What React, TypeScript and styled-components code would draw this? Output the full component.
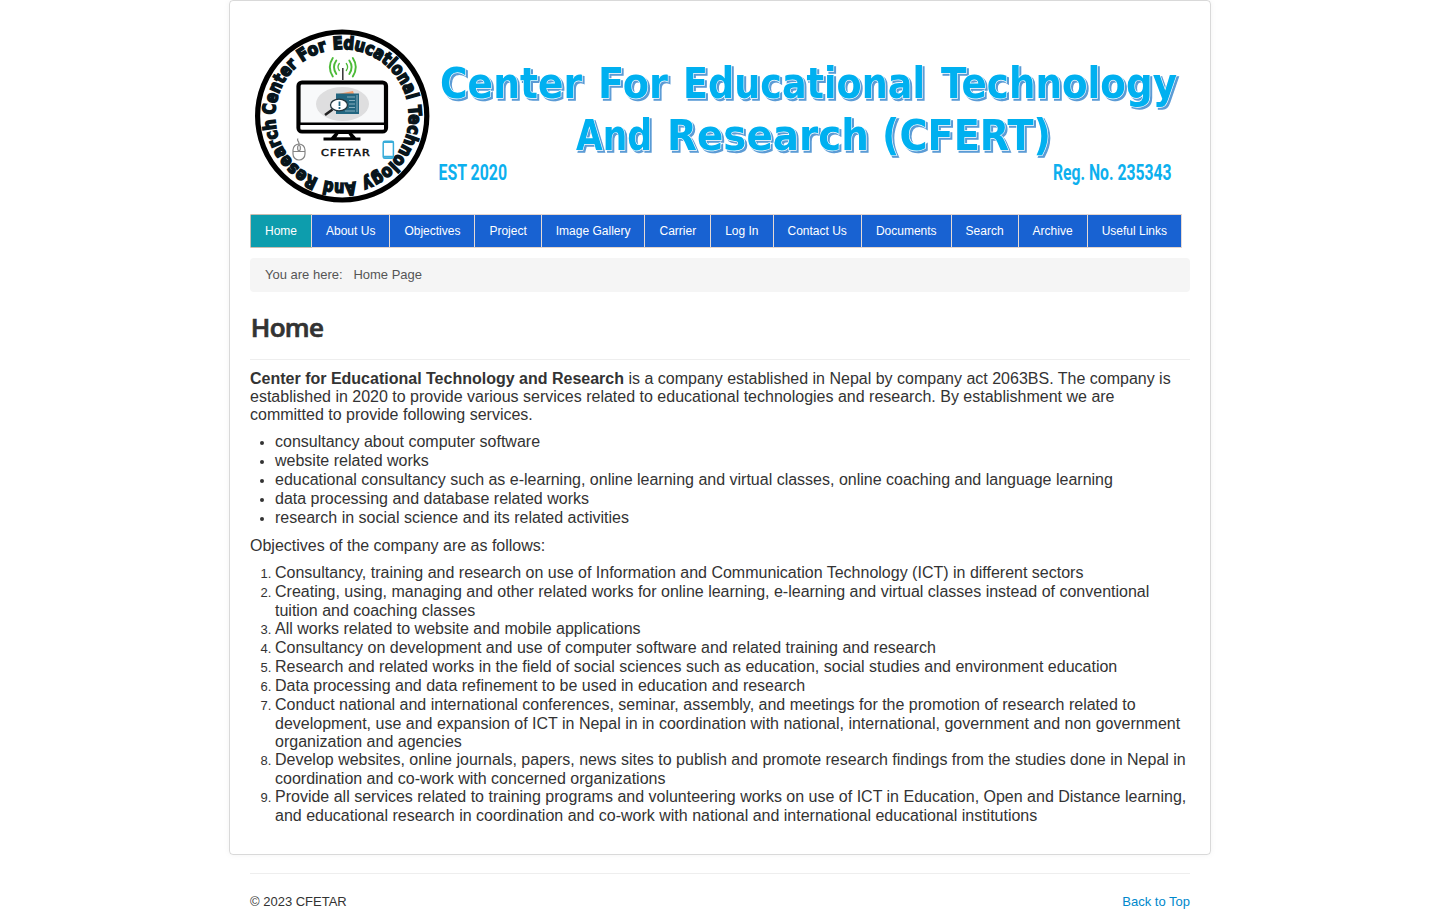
import React from "react";
import styled, { createGlobalStyle, css } from "styled-components";

const GlobalStyle = createGlobalStyle`
  * { box-sizing: border-box; }
  body {
    margin: 0;
    background: #fff;
    color: #333;
    font: 13px/18px "Liberation Sans", Arial, sans-serif;
  }
`;

const Page = styled.div`
  width: 982px;
  margin: 0 auto;
`;

const Card = styled.div`
  padding: 20px;
  border: 1px solid rgba(0, 0, 0, 0.15);
  border-radius: 4px;
  box-shadow: 0 0 6px rgba(0, 0, 0, 0.05);
`;

const Banner = styled.svg`
  display: block;
  width: 940px;
  height: 193px;
`;

const Nav = styled.ul`
  display: flex;
  width: max-content;
  margin: 0 0 10px;
  padding: 0;
  list-style: none;
  border: 1px solid #e6d5cb;
  border-right: 0;
`;

const NavItem = styled.li<{ $active?: boolean }>`
  padding: 7px 14px;
  color: #fff;
  font-size: 12px;
  background: #1862d2;
  border-right: 1px solid #e6d9d4;
  ${(p) => p.$active && css`
    background: #0d9dad;
    box-shadow: -1px 0 #c9bdb1, 0 -1px #c9bdb1, 0 1px #c9bdb1;
  `}
`;

const Breadcrumb = styled.div`
  display: flex;
  gap: 10.8px;
  height: 34px;
  padding: 8px 15px;
  color: #555;
  background: #f5f5f5;
  border-radius: 4px;
`;

const Title = styled.h1`
  margin: 18px 0 10px;
  padding: 0 0 15px 0.8px;
  border-bottom: 1px solid #eee;
  font: 600 26px/34px "Open Sans", sans-serif;
  letter-spacing: -0.7px;
  -webkit-text-stroke: 0.7px #333;
`;

const Paragraph = styled.p`
  margin: 0 0 9px;
  font-size: 16px;
`;

/* The zero-width character keeps each first line aligned to its smaller marker. */
const listStyle = css`
  margin: 0 0 9px 25px;
  padding: 0;
  font-size: 16px;

  li::marker {
    font-size: 13px;
  }

  li::before {
    content: "\\200b";
    font-size: 13px;
  }
`;
const Bullets = styled.ul`${listStyle}`;
const Numbers = styled.ol`${listStyle}`;

const Footer = styled.footer`
  display: flex;
  justify-content: space-between;
  margin: 18px 21px 0;
  padding: 19px 0 9px;
  border-top: 1px solid #eee;
`;

const TopLink = styled.a`
  color: #08c;
  text-decoration: none;
`;

const Lettering = styled.text`
  font-family: "DejaVu Sans", sans-serif;
  font-weight: 700;
  font-size: 43px;
  fill: #00b0f0;
  stroke: #fff;
  stroke-width: 1.4px;
  paint-order: stroke;
  filter: drop-shadow(2.2px 2.2px 0 #5b9bd5);
`;

const SmallLettering = styled.text`
  font-family: "Roboto", sans-serif;
  font-weight: 700;
  font-size: 22.5px;
  fill: #0db0ee;
`;

const RingText = styled.text`
  font-family: "DejaVu Sans", sans-serif;
  font-weight: 700;
  font-size: 17.5px;
  fill: #08151b;
  stroke: #08151b;
  stroke-width: 1.6;
`;

const SealName = styled.text`
  font-family: "DejaVu Sans", sans-serif;
  font-size: 8.8px;
  letter-spacing: 1px;
  fill: #111;
  stroke: #111;
  stroke-width: 0.5;
`;

const menu = [
  "Home", "About Us", "Objectives", "Project", "Image Gallery", "Carrier",
  "Log In", "Contact Us", "Documents", "Search", "Archive", "Useful Links",
];

const services = [
  "consultancy about computer software",
  "website related works",
  "educational consultancy such as e-learning, online learning and virtual classes, online coaching and language learning",
  "data processing and database related works",
  "research in social science and its related activities",
];

const objectives = [
  "Consultancy, training and research on use of Information and Communication Technology (ICT) in different sectors",
  "Creating, using, managing and other related works for online learning, e-learning and virtual classes instead of conventional tuition and coaching classes",
  "All works related to website and mobile applications",
  "Consultancy on development and use of computer software and related training and research",
  "Research and related works in the field of social sciences such as education, social studies and environment education",
  "Data processing and data refinement to be used in education and research",
  "Conduct national and international conferences, seminar, assembly, and meetings for the promotion of research related to development, use and expansion of ICT in Nepal in in coordination with national, international, government and non government organization and agencies",
  "Develop websites, online journals, papers, news sites to publish and promote research findings from the studies done in Nepal in coordination and co-work with concerned organizations",
  "Provide all services related to training programs and volunteering works on use of ICT in Education, Open and Distance learning, and educational research in coordination and co-work with national and international educational institutions",
];

type Word = { text: string; x: number; y: number; width: number };

const bannerWords: Word[] = [
  { text: "Center", x: 440, y: 98, width: 142 },
  { text: "For", x: 598, y: 98, width: 70 },
  { text: "Educational", x: 683, y: 98, width: 242 },
  { text: "Technology", x: 941, y: 98, width: 236 },
  { text: "And", x: 576, y: 150, width: 76 },
  { text: "Research", x: 667, y: 150, width: 202 },
  { text: "(CFERT)", x: 882, y: 150, width: 169 },
];

const BannerWord = ({ text, x, y, width }: Word) => (
  <Lettering x={x} y={y} textLength={width} lengthAdjust="spacingAndGlyphs">{text}</Lettering>
);

// Words round the seal: start and end angle, clockwise from nine o'clock.
const ringWords: [string, number, number][] = [
  ["Center", 1, 49],
  ["For", 53, 77],
  ["Educational", 82, 166],
  ["Technology", 171, 253],
  ["And", 258, 285],
  ["Research", 290, 357],
];
const R = 67;
const arc = (deg: number) => (deg * Math.PI * R) / 180;

const Seal = () => (
  <g>
    <path id="ring" fill="none" d={`M${342 - R} 116a${R} ${R} 0 1 1 ${2 * R} 0a${R} ${R} 0 1 1 ${-2 * R} 0`} />
    <ellipse cx="342.2" cy="116" rx="84.6" ry="84" fill="#fff" stroke="#000" strokeWidth="5.2" />
    {ringWords.map(([text, from, to]) => (
      <RingText key={text}>
        <textPath href="#ring" startOffset={arc(from)} textLength={arc(to - from)} lengthAdjust="spacingAndGlyphs">
          {text}
        </textPath>
      </RingText>
    ))}
    {/* antenna */}
    <g fill="none" stroke="#4cbb38" strokeWidth="1.9" strokeLinecap="round">
      <path d="M339.3 63.5q-2.6 3.5 0 7M346.3 63.5q2.6 3.5 0 7" strokeWidth="1.3" />
      <path d="M336.3 60.5q-4.6 6.5 0 13.5M349.3 60.5q4.6 6.5 0 13.5" />
      <path d="M332.8 58q-6 9 0 18.5M352.8 58q6 9 0 18.5" />
    </g>
    <path d="M342.8 68v12" stroke="#333" strokeWidth="1.5" />
    {/* monitor */}
    <rect x="298.5" y="82.5" width="87.5" height="49" rx="3.5" fill="#f8f9fa" stroke="#000" strokeWidth="4.2" />
    <path d="M300 123.8h85" stroke="#000" strokeWidth="2.4" />
    <rect x="300.5" y="125.2" width="83.5" height="4.3" fill="#fff" />
    <path d="M335 133h17l4 4.5h4.5v3h-37v-3h7.5z" fill="#000" />
    <path d="M338.5 134h10l2 3.2h-14z" fill="#fff" />
    <ellipse cx="342.5" cy="104" rx="26.5" ry="17" fill="#dededf" />
    <path d="M338 94l15-3 1 3z" fill="#f29b68" />
    <rect x="336" y="93.5" width="23" height="20.5" fill="#236680" />
    <path d="M347 97h8M349 100.5h6M349 104h6M349 107.5h6M345 111h10M357 95v17" stroke="#92b7c4" strokeWidth="0.9" />
    <path d="M332.5 109.5l-7.5 5.5" stroke="#222" strokeWidth="2.6" />
    <ellipse cx="339" cy="105" rx="8.5" ry="5.8" fill="#fff" stroke="#27383f" strokeWidth="1.3" />
    <path d="M339.5 101.5v4.5M339.5 107v2" stroke="#236680" strokeWidth="1.8" />
    {/* mouse */}
    <g fill="none" stroke="#858585" strokeWidth="1.2">
      <rect x="293" y="144" width="12" height="16" rx="6" />
      <path d="M293 151.5h12M299 144v7.5M299 144q0-2-1-3t0-2.5" />
      <rect x="297.7" y="145.5" width="2.6" height="5" rx="1.3" fill="#fff" />
    </g>
    {/* phone */}
    <rect x="383.2" y="141.2" width="10.2" height="17" rx="1.5" fill="#fff" stroke="#37acd9" strokeWidth="1.5" />
    <path d="M383.2 156.8h10.2M383.2 142h10.2" stroke="#37acd9" strokeWidth="2" />
    <SealName x="321" y="156" textLength="50" lengthAdjust="spacingAndGlyphs">CFETAR</SealName>
  </g>
);

export default function App() {
  return (
    <>
      <GlobalStyle />
      <Page>
        <Card>
          <Banner viewBox="250 21 940 193">
            <Seal />
            {bannerWords.map((w) => <BannerWord key={w.text} {...w} />)}
            <SmallLettering x="438.5" y="180" textLength="68.5" lengthAdjust="spacingAndGlyphs">EST 2020</SmallLettering>
            <SmallLettering x="1053" y="180" textLength="118.5" lengthAdjust="spacingAndGlyphs">Reg. No. 235343</SmallLettering>
          </Banner>
          <Nav>
            {menu.map((label, i) => <NavItem key={label} $active={i === 0}>{label}</NavItem>)}
          </Nav>
          <Breadcrumb>
            <span>You are here:</span>
            <span>Home Page</span>
          </Breadcrumb>
          <Title>Home</Title>
          <Paragraph>
            <strong>Center for Educational Technology and Research</strong> is a company established in Nepal by company act 2063BS. The company is established in 2020 to provide various services related to educational technologies and research. By establishment we are committed to provide following services.
          </Paragraph>
          <Bullets>
            {services.map((s) => <li key={s}>{s}</li>)}
          </Bullets>
          <Paragraph>Objectives of the company are as follows:</Paragraph>
          <Numbers>
            {objectives.map((s) => <li key={s}>{s}</li>)}
          </Numbers>
        </Card>
        <Footer>
          <span>© 2023 CFETAR</span>
          <TopLink href="#top">Back to Top</TopLink>
        </Footer>
      </Page>
    </>
  );
}
